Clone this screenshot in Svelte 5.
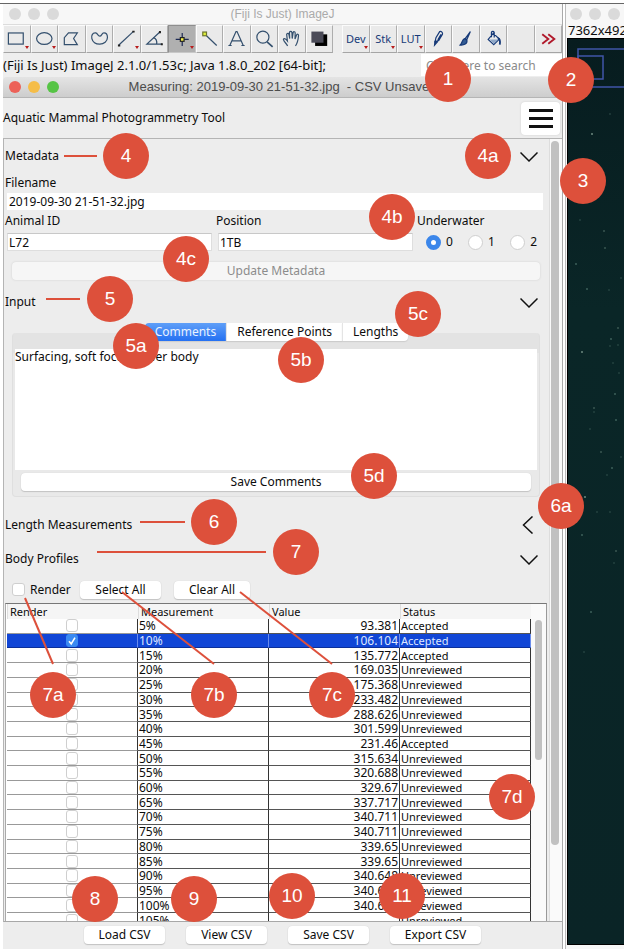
<script>
  const tools = [
    { name: 'Rectangle', drop: true },
    { name: 'Oval', drop: true },
    { name: 'Polygon' },
    { name: 'Freehand' },
    { name: 'Line', drop: true },
    { name: 'Angle' },
    { name: 'Point', drop: true, active: true },
    { name: 'Wand' },
    { name: 'Text' },
    { name: 'Magnifier' },
    { name: 'Hand' },
    { name: 'Colour' },
    { name: 'gap' },
    { name: 'Dev', drop: true, text: true },
    { name: 'Stk', drop: true, text: true },
    { name: 'LUT', drop: true, text: true },
    { name: 'Pencil' },
    { name: 'Brush' },
    { name: 'Fill' },
    { name: 'Empty' },
    { name: 'More' }
  ];

  let rows = $state(
    [
      ['5%', '93.381', 'Accepted'],
      ['10%', '106.104', 'Accepted'],
      ['15%', '135.772', 'Accepted'],
      ['20%', '169.035', 'Unreviewed'],
      ['25%', '175.368', 'Unreviewed'],
      ['30%', '233.482', 'Unreviewed'],
      ['35%', '288.626', 'Unreviewed'],
      ['40%', '301.599', 'Unreviewed'],
      ['45%', '231.46', 'Accepted'],
      ['50%', '315.634', 'Unreviewed'],
      ['55%', '320.688', 'Unreviewed'],
      ['60%', '329.67', 'Unreviewed'],
      ['65%', '337.717', 'Unreviewed'],
      ['70%', '340.711', 'Unreviewed'],
      ['75%', '340.711', 'Unreviewed'],
      ['80%', '339.65', 'Unreviewed'],
      ['85%', '339.65', 'Unreviewed'],
      ['90%', '340.648', 'Unreviewed'],
      ['95%', '340.648', 'Unreviewed'],
      ['100%', '340.648', 'Unreviewed'],
      ['105%', '', 'Unreviewed']
    ].map(([size, value, status], i) => ({ size, value, status, render: i === 1 }))
  );

  let comments = $state('Surfacing, soft focus, lower body');
  let underwater = $state('0');
  let tab = $state('Comments');
  const tabs = ['Comments', 'Reference Points', 'Lengths'];

  const callouts = [
    ['1', 448, 79], ['2', 571, 80], ['3', 583, 181], ['4', 126, 156], ['4a', 488, 156],
    ['4b', 392, 217], ['4c', 186, 259], ['5', 110, 299], ['5a', 136, 346], ['5b', 301, 360],
    ['5c', 418, 314], ['5d', 374, 476], ['6', 214, 522], ['6a', 561, 506], ['7', 296, 552],
    ['7a', 53, 695], ['7b', 214, 695], ['7c', 332, 695], ['7d', 512, 797], ['8', 95, 899],
    ['9', 194, 899], ['10', 292, 896], ['11', 402, 896]
  ];
  const leaders = [
    [64, 156, 97, 156], [46, 299, 80, 299], [140, 522, 185, 522], [97, 552, 266, 552],
    [25, 598, 53, 664], [122, 592, 214, 664], [240, 592, 332, 664]
  ];
  const specks = [
    [24, 133], [42, 113], [12, 219], [8, 263], [37, 247], [53, 277], [19, 288], [41, 289],
    [50, 327], [43, 338], [42, 345], [50, 344], [14, 351], [45, 362], [51, 372], [47, 393],
    [26, 407], [26, 411], [48, 419], [22, 428], [33, 451], [44, 467], [53, 456], [39, 474],
    [17, 496], [42, 511], [29, 511], [14, 534], [48, 550], [46, 562], [23, 611], [16, 651], [36, 230]
  ];
</script>

{#snippet chevron(dir)}
  <button class="chev" aria-label="Toggle section">
    <svg width="18" height="18" viewBox="0 0 18 18" fill="none" stroke="#111" stroke-width="1.5">
      <path d={dir === 'left' ? 'M12.5 0.5 L3.5 9 L12.5 17.5' : 'M0.5 5.5 L9 14 L17.5 5.5'} />
    </svg>
  </button>
{/snippet}

{#snippet icon(name)}
  <svg class="icon" viewBox="0 0 27 28" fill="none" stroke="#34506e" stroke-width="1.3">
    {#if name === 'Rectangle'}
      <rect x="4.5" y="7.5" width="16" height="12" />
    {:else if name === 'Oval'}
      <ellipse cx="13" cy="13.5" rx="8.3" ry="6.3" />
    {:else if name === 'Polygon'}
      <path d="M5.5 20 V12.5 L10 7.5 H19.5 L15.5 13.5 L19.5 20 Z" />
    {:else if name === 'Freehand'}
      <path d="M9 7.5 C5.5 7.2 4.3 10.5 5 13.5 C6 17.500 9.500 19.500 13.500 19.500 C18 19.500 21.800 16.500 21.800 12.500 C21.800 9.500 20.200 7.500 18 7.500 C15.500 7.500 15.800 11 13.500 11 C11.200 11 11.500 7.700 9 7.500 Z" />
    {:else if name === 'Line'}
      <path d="M5 20.5 L20.5 6" /><path d="M4 20 h2.5 v2 h-2.5 z M19.5 5 h2.5 v2 h-2.5 z" fill="#222" stroke="none" />
    {:else if name === 'Angle'}
      <path d="M19 6.5 L5 19.5 H21 M12 12.5 C15 13.5 16 16.5 15.5 19.5" /><path d="M18 5.5 h2.2 v2.2 h-2.2 z M20 18.5 h2.2 v2.2 h-2.2 z" fill="#222" stroke="none" />
    {:else if name === 'Point'}
      <path d="M7 14.5 H21 M14 7.5 V21.5" stroke="#1c2a55" /><rect x="12" y="12.5" width="4" height="4" fill="#f4f04a" stroke="#222" />
    {:else if name === 'Wand'}
      <path d="M10 10.5 L21 21" /><rect x="6" y="6.5" width="4" height="4" fill="#dff03c" stroke="#6c7530" />
    {:else if name === 'Text'}
      <path d="M6 21 L12.7 6 H13.8 L20.5 21 M8.5 16 H18 M4.5 21 H8 M18.5 21 H22" />
    {:else if name === 'Magnifier'}
      <circle cx="11.5" cy="12" r="6.5" /><path d="M16 17 L22 22.5" stroke-width="1.8" />
    {:else if name === 'Hand'}
      <path d="M9 21.5 C8 19 5 17 4.5 14.5 C5 13 7 13.5 8.8 16 L8 9 C8.3 7.5 10 7.5 10.5 9 L11.3 13.5 L11 7 C11.5 5.5 13.3 5.5 13.7 7 L14 13.5 L15 7 C15.5 5.7 17.2 6 17.2 7.5 L17 14 L18.8 9.5 C19.5 8.3 21 8.8 20.8 10.2 C20.5 14 20 18 17.5 21.5" />
    {:else if name === 'Colour'}
      <rect x="8.5" y="9" width="13" height="12.5" fill="#000" stroke="none" /><rect x="4.500" y="6" width="13" height="12" fill="#4b4b58" stroke="none" />
    {:else if name === 'Pencil'}
      <g stroke="#173a78"><path d="M9.500 17 L10.500 12.500 L14.500 6 C16.500 5.500 18 7 17.500 8.800 L13.500 15.500 Z M12.500 15 L16 9" /><path d="M9.500 16 L9 20.500 L12.500 16.500" fill="#173a78" /></g>
    {:else if name === 'Brush'}
      <g stroke="#173a78"><path d="M18.500 6 L13 13.500 L14.500 15 Z" fill="#dfe7f0" /><path d="M12.500 13.500 C9.500 14 10 18 7.500 20.500 C11.500 21 15.500 19 14.700 15.500 Z" fill="#335c94" /></g>
    {:else if name === 'Fill'}
      <g stroke="#173a78"><path d="M13 8 L19.500 14 L13.500 20 L7.500 14.500 Z M11 12 V7 C11.500 5.500 13.500 5.500 14 7 V12.500" /><path d="M9 14.500 H18.500 L13.500 19 Z" fill="#8fa8c8" stroke="none" /><path d="M18 13 C20.500 14 20.500 17 20 20" stroke-width="2" /></g>
    {:else if name === 'More'}
      <path d="M6.500 9 L13 14 L6.500 19 M13 9 L19.500 14 L13 19" stroke="#b0182a" stroke-width="2" />
    {/if}
  </svg>
{/snippet}

<div class="desktop">
  <main class="stack">
    <div class="bar idle">
      <span class="lights"><i></i><i></i><i></i></span>
      <span class="title">(Fiji Is Just) ImageJ</span>
    </div>
    <div class="tools">
      {#each tools as t}
        {#if t.name === 'gap'}
          <span></span>
        {:else}
          <button class="tool" class:active={t.active} aria-label={t.name}>
            {#if t.text}<span class="word">{t.name}</span>{:else}{@render icon(t.name)}{/if}
            {#if t.drop}<span class="drop"></span>{/if}
          </button>
        {/if}
      {/each}
    </div>
    <div class="status">
      <span>(Fiji Is Just) ImageJ 2.1.0/1.53c; Java 1.8.0_202 [64-bit];</span>
      <input class="search" aria-label="Search" placeholder="Click here to search" />
    </div>

    <div class="bar front">
      <span class="lights colour"><i></i><i></i><i></i></span>
      <span class="title">Measuring: 2019-09-30 21-51-32.jpg &nbsp;- CSV Unsaved</span>
    </div>
    <header>
      <span>Aquatic Mammal Photogrammetry Tool</span>
      <button class="menu" aria-label="Menu"><i></i><i></i><i></i></button>
    </header>

    <div class="scroller">
      <div class="content">
        <div class="head"><span>Metadata</span>{@render chevron('down')}</div>
        <div class="field file">
          <label for="file">Filename</label>
          <input id="file" value="2019-09-30 21-51-32.jpg" />
        </div>
        <div class="fields">
          <div class="field">
            <label for="animal">Animal ID</label>
            <input id="animal" value="L72" />
          </div>
          <div class="field">
            <label for="position">Position</label>
            <input id="position" value="1TB" />
          </div>
          <div class="field" role="radiogroup" aria-labelledby="water">
            <span id="water">Underwater</span>
            <div class="radios">
              {#each ['0', '1', '2'] as n}
                <label><input type="radio" name="underwater" value={n} bind:group={underwater} />{n}</label>
              {/each}
            </div>
          </div>
        </div>
        <button class="btn update" disabled>Update Metadata</button>

        <div class="head input"><span>Input</span>{@render chevron('down')}</div>
        <div class="tabs" role="tablist">
          {#each tabs as t}
            <button role="tab" aria-selected={tab === t} class:on={tab === t} onclick={() => (tab = t)}>{t}</button>
          {/each}
        </div>
        <div class="pane">
          <textarea aria-label="Comments" bind:value={comments}></textarea>
          <button class="btn save">Save Comments</button>
        </div>

        <div class="head"><span>Length Measurements</span>{@render chevron('left')}</div>
        <div class="head"><span>Body Profiles</span>{@render chevron('down')}</div>
        <div class="render">
          <label><input type="checkbox" />Render</label>
          <button class="btn" onclick={() => rows.forEach((r) => (r.render = true))}>Select All</button>
          <button class="btn" onclick={() => rows.forEach((r) => (r.render = false))}>Clear All</button>
        </div>
        <div class="grid">
          <div class="clip">
            <table>
              <thead><tr><th>Render</th><th>Measurement</th><th>Value</th><th>Status</th></tr></thead>
              <tbody>
                {#each rows as r, i}
                  <tr class:sel={i === 1}>
                    <td class="tick"><input type="checkbox" aria-label="Render {r.size}" bind:checked={r.render} /></td>
                    <td class="num">{r.size}</td>
                    <td class="num val">{r.value}</td>
                    <td>{r.status}</td>
                  </tr>
                {/each}
              </tbody>
            </table>
          </div>
          <div class="track inner"><i></i></div>
        </div>
      </div>
      <div class="track outer"><i></i></div>
    </div>

    <footer>
      <button class="btn">Load CSV</button>
      <button class="btn">View CSV</button>
      <button class="btn">Save CSV</button>
      <button class="btn export">Export CSV</button>
    </footer>
  </main>

  <aside>
    <div class="bar idle"><span class="lights"><i></i><i></i><i></i></span></div>
    <div class="dims">7362x4921</div>
    <div class="photo">
      <svg width="100%" height="100%">
        <g fill="none" stroke="#4055a8" stroke-width="1.5">
          <rect x="10" y="10" width="200" height="38" />
          <rect x="10" y="17" width="25" height="23" />
        </g>
        {#each specks as [x, y], i}
          <circle cx={x} cy={y - 38} r={i % 3 === 0 ? 1 : 0.7} fill={i % 4 === 0 ? '#6d8a80' : '#3d5f5a'} />
        {/each}
      </svg>
    </div>
  </aside>

  <svg class="leaders" aria-hidden="true">
    {#each leaders as [x1, y1, x2, y2]}
      <line {x1} {y1} {x2} {y2} />
    {/each}
  </svg>
  {#each callouts as [name, x, y]}
    <span class="pin" style="left:{x - 23}px;top:{y - 23}px">{name}</span>
  {/each}
</div>

<style>
  :global(body) { background: #fff; }
  .desktop {
    position: relative;
    box-sizing: border-box;
    height: 100vh;
    min-height: 640px;
    padding: 4px 0 3px 3px;
    display: grid;
    grid-template-columns: minmax(0, 1fr) 59px;
    gap: 2px;
    overflow: hidden;
    background: linear-gradient(#fff 0 3px, #666 3px 4px, #fff 4px);
    font: 12px/16px "Noto Sans", "Open Sans", sans-serif;
    color: #0c0c0c;
  }
  .stack {
    display: flex;
    flex-direction: column;
    min-height: 0;
    background: #ededed;
    border-right: 1px solid #a9a9a9;
  }
  button, input, textarea { font: inherit; color: inherit; box-sizing: border-box; margin: 0; }
  button { border: 0; padding: 0; }

  .bar { flex: none; display: flex; align-items: center; height: 20px; }
  .idle { background: #f7f7f7; color: #aaa; }
  .front { height: 21px; background: linear-gradient(#e4e4e4, #cdcdcd); border-radius: 4px 4px 0 0; border-bottom: 1px solid #b5b5b5; box-sizing: border-box; color: #4c4c4c; }
  .title { flex: 1; text-align: center; margin-right: 55px; font: 12px/18px "Liberation Sans", Arial, sans-serif; white-space: nowrap; }
  .front .title { font-size: 13px; }
  .lights { display: flex; gap: 7px; padding-left: 6px; width: 49px; }
  .lights i { flex: none; width: 12px; height: 12px; border-radius: 50%; background: #dadada; }
  .colour i:nth-child(1) { background: #ec6158; }
  .colour i:nth-child(2) { background: #f5bd48; }
  .colour i:nth-child(3) { background: #56c445; }

  .tools {
    flex: none;
    display: grid;
    grid-template-columns: repeat(12, minmax(0, 1fr)) 9px repeat(8, minmax(0, 1fr));
    height: 29px;
    border-top: 1px solid #dcdcdc;
    box-sizing: border-box;
  }
  .tool { position: relative; background: #eaeaea; border: 1px solid; border-color: #fbfbfb #adadad #a5a5a5 #fbfbfb; }
  .tool.active { background: #b0b0b0; border-color: #8e8e8e #c8c8c8 #c8c8c8 #8e8e8e; }
  .icon { display: block; width: 100%; height: 26px; }
  .word { display: block; font-size: 11px; line-height: 26px; color: #173a78; }
  .drop { position: absolute; right: 1px; bottom: 3px; border: 2px solid transparent; border-top: 3px solid #b81c1c; border-bottom: 0; }

  .status { flex: none; display: flex; align-items: center; justify-content: space-between; height: 24px; background: #eee; white-space: nowrap; font-size: 13px; }
  .search { width: 141px; height: 22px; border: 0; padding: 0 5px; background: #fff; }
  .search::placeholder { color: #8a8a8a; opacity: 1; }
  .search { font-size: 12px; }

  header { flex: none; display: flex; align-items: center; justify-content: space-between; height: 40px; padding-right: 2px; }
  .menu { width: 39px; height: 33px; border-radius: 4px; background: #fff; display: flex; flex-direction: column; align-items: center; justify-content: center; gap: 5px; box-shadow: 0 0 2px #ccc; }
  .menu i { width: 24px; height: 3px; background: #111; }

  .scroller { flex: 1; min-height: 0; display: flex; border: 1px solid #b4b4b4; border-right: 0; border-bottom-color: #a8a8a8; }
  .content { flex: 1; min-width: 0; display: flex; flex-direction: column; }
  .head { flex: none; display: flex; align-items: center; justify-content: space-between; height: 34px; padding: 0 11px 0 1px; }
  .head.input { height: 43px; }
  .chev { background: none; width: 18px; height: 18px; }
  .chev svg { display: block; }

  .field { display: flex; flex-direction: column; gap: 1px; min-width: 0; }
  .field > label, .field > span { line-height: 22px; padding-left: 1px; }
  .field > input { height: 18px; margin-left: 3px; border: 1px solid #dedede; border-top-color: #c8c8c8; padding: 0 1px; background: #fff; }
  .file { margin-right: 6px; }
  .file > label { line-height: 19px; }
  .file > input { height: 17px; border: 0; padding: 0 2px; }
  .fields { display: grid; grid-template-columns: 208px 198px 1fr; gap: 3px; }
  .radios { display: flex; justify-content: space-between; align-items: center; height: 18px; padding: 0 12px 0 10px; }
  .radios label { display: flex; align-items: center; gap: 5px; }
  .radios input, .render input, .tick input { appearance: none; background: #fff; border: 1px solid #cfcfcf; }
  .radios input { width: 15px; height: 15px; border-radius: 50%; }
  .radios input:checked { border: 5px solid #3b86ea; }

  .btn { height: 18px; border-radius: 4px; background: #fff; box-shadow: 0 1px 1px #c2c2c2, 0 0 1px #ccc; line-height: 18px; }
  .update { margin: 11px 9px 0 8px; background: #f6f6f6; color: #8c8c8c; box-shadow: 0 0 2px #ccc; flex: none; }

  .tabs { display: flex; justify-content: center; position: relative; z-index: 1; }
  .tabs button { height: 18px; padding: 0 10px; background: #fff; border-left: 1px solid #e4e4e4; box-shadow: 0 1px 1px #ccc; }
  .tabs button:first-child { border-radius: 4px 0 0 4px; border: 0; }
  .tabs button:last-child { border-radius: 0 4px 4px 0; }
  .tabs .on { background: linear-gradient(#5f9ff8, #2470f2); color: #e8f1ff; }
  .pane { flex: none; display: flex; flex-direction: column; margin: -8px 9px 11px 8px; padding: 16px 2px 5px; background: linear-gradient(#e3e3e3 0 20px, #e9e9e9 20px); border-radius: 4px; border: 1px solid #dfdfdf; border-top: 0; }
  textarea { height: 121px; border: 0; resize: none; outline: 0; padding: 0; background: #fff; }
  .save { margin: 3px 6px 0; }

  .render { flex: none; display: flex; align-items: center; height: 27px; }
  .render label { display: flex; align-items: center; gap: 5px; padding-left: 8px; width: 68px; }
  .render input { width: 13px; height: 13px; border-radius: 3px; }
  .render .btn { width: 81px; }
  .render .btn + .btn { width: 76px; margin-left: 13px; }

  .grid { flex: 1; min-height: 0; display: flex; margin: 0 2px 0 1px; border: 1px solid #777; border-bottom: 0; border-left-color: #aaa; border-right-color: #999; background: #fff; }
  .clip { flex: 1; min-width: 0; overflow: hidden; padding-left: 1px; }
  table { width: 100%; height: 324px; table-layout: fixed; border-collapse: separate; border-spacing: 0; font-size: 11px; line-height: 13px; }
  th { height: 15px; padding: 0 2px; text-align: left; font-weight: 400; background: #f5f5f5; border-left: 1px solid #ddd; }
  td { padding: 0 1px; border-right: 1px solid #333; border-bottom: 1px solid #555; white-space: nowrap; }
  .num { font-size: 12px; }
  .val { text-align: right; }
  .tick { text-align: center; line-height: 0; border-bottom-color: #999; }
  .tick input { display: block; width: 12px; height: 13px; margin: 0 auto; border-radius: 3px; }
  .tick input:checked { background: #3a8af2 url("data:image/svg+xml,%3Csvg xmlns='http://www.w3.org/2000/svg' viewBox='0 0 12 12'%3E%3Cpath d='M3 6.5 L5.2 9 L9 3' fill='none' stroke='white' stroke-width='1.6'/%3E%3C/svg%3E") center / 12px no-repeat; border-color: #3a8af2; }
  .sel td { background: #1146d6; color: #dfe8ff; border-bottom-color: #0b2f9a; border-right-color: #6a8cec; }

  .track { flex: none; background: #fafafa; }
  .track i { display: block; border-radius: 4px; background: #c1c1c1; }
  .inner { width: 15px; }
  .inner i { width: 7px; height: 140px; margin: 16px 0 0 4px; }
  .outer { width: 13px; border-left: 1px solid #ddd; box-sizing: border-box; }
  .outer i { width: 8px; height: 90%; margin: 2px 0 0 1px; }

  footer { flex: none; display: flex; justify-content: center; align-items: flex-start; gap: 21px; height: 23px; padding-top: 4px; }
  footer .btn { width: 81px; }
  footer .export { width: 91px; }

  aside { display: flex; flex-direction: column; min-height: 0; overflow: hidden; border-left: 1px solid #bbb; background: #f7f7f7; }
  aside .lights { padding-left: 4px; }
  .dims { height: 14px; font-size: 13px; line-height: 13px; padding-left: 2px; flex: none; }
  .photo { flex: 1; min-height: 0; margin: 0 0 4px 1px; background: linear-gradient(#071c1f, #0a2627 30%, #0a2426); border: 1px solid #000; border-right: 0; }
  .photo svg { display: block; }

  .leaders { position: absolute; inset: 0; width: 100%; height: 100%; z-index: 2; pointer-events: none; }
  .leaders line { stroke: #dd503b; stroke-width: 2; }
  .pin { position: absolute; z-index: 3; width: 46px; height: 46px; border-radius: 50%; background: #dd503b; color: #fff; text-align: center; font: 19px/46px "Liberation Sans", Arial, sans-serif; }
</style>
